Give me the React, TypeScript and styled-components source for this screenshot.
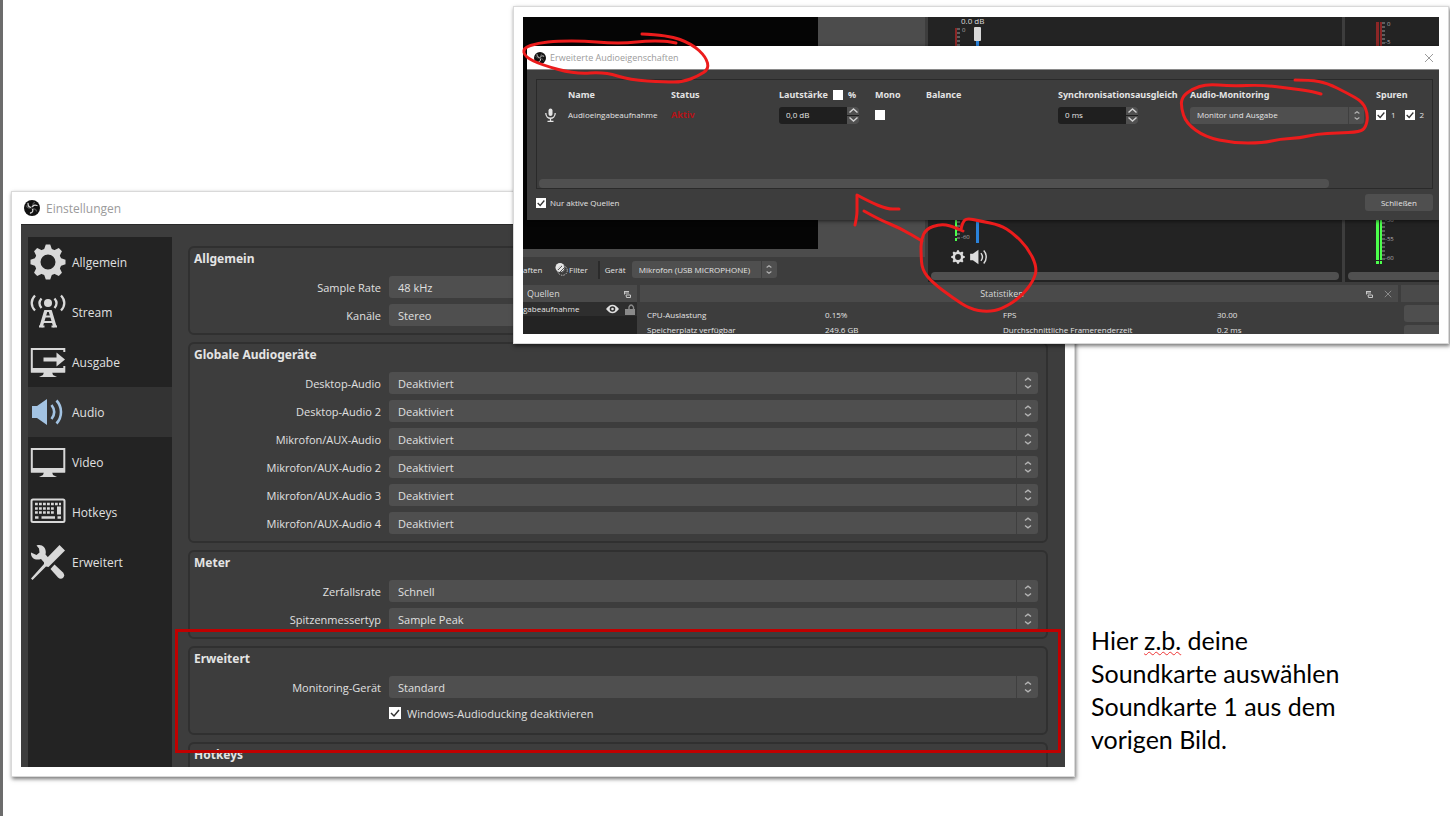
import React, { useId } from "react";
import styled, { createGlobalStyle, css } from "styled-components";

const GlobalStyle = createGlobalStyle`
  *, *::before, *::after { box-sizing: border-box; }
  body { margin: 0; background: #fff; }
  button, input, select { font: inherit; color: inherit; margin: 0; padding: 0; border: 0; background: none; border-radius: 0; }
`;

const uiFont = `"Open Sans", "Noto Sans", sans-serif`;
const boldFont = `"Noto Sans", "Open Sans", sans-serif`;

const Slide = styled.main`
  position: relative;
  display: flex;
  align-items: flex-start;
  min-height: 100vh;
  padding: 191px 0 38px 8px;
  border-left: 3px solid #6c6c6c;
  overflow: hidden;
  font-family: ${uiFont};
`;

const frame = css`
  border: 1px solid #d9d9d9;
  background: #fff;
  box-shadow: 1px 2px 4px rgba(0, 0, 0, 0.55);
`;

/* ---------- settings window ---------- */

const SettingsCard = styled.section`
  ${frame}
  position: relative;
  flex: 1;
  min-width: 0;
  padding: 0 9px 9px;
  font-size: 11px;
  color: #e0e0e0;
`;

const SettingsTitle = styled.header`
  display: flex;
  align-items: center;
  gap: 6px;
  height: 32px;
  padding-left: 3px;
  font-size: 12px;
  color: #9b9b9b;
`;

const SettingsBody = styled.div`
  display: flex;
  gap: 16px;
  padding: 12px 17px 0 7px;
  background: #3d3d3d;
  border-top: 1px solid #2a2a2a;
`;

const Sidebar = styled.nav`
  width: 144px;
  background: #232323;
`;

const SideItem = styled.button<{ $active?: boolean }>`
  display: flex;
  align-items: center;
  gap: 6px;
  width: 100%;
  height: 50px;
  padding: 0 2px;
  text-align: left;
  font-size: 12px;
  color: #e0e0e0;
  background: ${(p) => (p.$active ? "#333333" : "transparent")};
  svg { color: ${(p) => (p.$active ? "#a3c3e2" : "#d8d8d8")}; }
`;

const Groups = styled.div`
  flex: 1;
  min-width: 0;
  display: flex;
  flex-direction: column;
  gap: 7px;
  padding-top: 9px;
`;

const Group = styled.section<{ $cut?: boolean }>`
  border: 2px solid #303030;
  border-radius: ${(p) => (p.$cut ? "6px 6px 0 0" : "6px")};
  border-bottom-width: ${(p) => (p.$cut ? "0" : "2px")};
  height: ${(p) => (p.$cut ? "25px" : "auto")};
  padding: 0 8px 7px 4px;
`;

const GroupTitle = styled.h2`
  margin: 0;
  height: 28px;
  padding-top: 2px;
  font-family: ${boldFont};
  font-size: 12px;
  line-height: 18px;
  font-weight: 700;
  color: #e4e4e4;
`;

const Rows = styled.div`
  display: flex;
  flex-direction: column;
  gap: 6px;
`;

const FormRow = styled.div`
  display: grid;
  grid-template-columns: 187px 1fr;
  gap: 8px;
  align-items: center;
  > label { text-align: right; }
`;

const CheckRow = styled.label`
  display: flex;
  align-items: center;
  gap: 6px;
  height: 18px;
  margin: 0 0 4px 195px;
`;

const Highlight = styled.div`
  position: absolute;
  left: 163px;
  right: 13px;
  bottom: 23px;
  height: 124px;
  border: 3px solid #c00000;
`;

/* ---------- shared controls ---------- */

const SelectBox = styled.span<{ $small?: boolean }>`
  display: grid;
  grid-template-columns: 1fr ${(p) => (p.$small ? "16px" : "22px")};
  height: ${(p) => (p.$small ? "17px" : "22px")};
  border-radius: 3px;
  background: #4f4f4f;
  overflow: hidden;
  > select {
    grid-area: 1 / 1 / 2 / 3;
    width: 100%;
    appearance: none;
    padding-left: ${(p) => (p.$small ? "7px" : "9px")};
  }
  > span {
    grid-area: 1 / 2;
    display: flex;
    align-items: center;
    justify-content: center;
    border-left: 1px solid #3f3f3f;
    pointer-events: none;
    color: #b4b4b4;
  }
`;

const Tick = styled.span<{ $size: number }>`
  display: inline-grid;
  width: ${(p) => p.$size}px;
  height: ${(p) => p.$size}px;
  background: #fff;
  color: #333;
  > * { grid-area: 1 / 1; width: 100%; height: 100%; }
  > input { appearance: none; }
  > svg { pointer-events: none; }
`;

function CheckBox({ size, on, label }: { size: number; on?: boolean; label?: string }) {
  return (
    <Tick $size={size}>
      <input type="checkbox" defaultChecked={on} aria-label={label} />
      {on && (
        <svg viewBox="0 0 12 12" fill="none" stroke="currentColor" strokeWidth="1.5">
          <path d="M2 6l3 3 5-6" />
        </svg>
      )}
    </Tick>
  );
}

function Select({ id, value, small, label }: { id?: string; value: string; small?: boolean; label?: string }) {
  return (
    <SelectBox $small={small}>
      <select id={id} aria-label={label} defaultValue={value}>
        <option>{value}</option>
      </select>
      <span>
        <svg width={small ? 8 : 10} height={small ? 11 : 14} viewBox="0 0 10 14" fill="none" stroke="currentColor" strokeWidth="1.4">
          <path d="M2 4.5L5 2.200l3 2.300M2 9.500l3 2.300 3-2.300" />
        </svg>
      </span>
    </SelectBox>
  );
}

function Field({ label, value }: { label: string; value: string }) {
  const id = useId();
  return (
    <FormRow>
      <label htmlFor={id}>{label}</label>
      <Select id={id} value={value} />
    </FormRow>
  );
}

/* ---------- icons ---------- */

function ObsLogo({ size }: { size: number }) {
  return (
    <svg width={size} height={size} viewBox="0 0 32 32">
      <circle cx="16" cy="16" r="16" fill="#111" />
      <g fill="none" stroke="#d5d5d5" strokeWidth="2.6" strokeLinecap="round">
        <path d="M8 7c0 5 3 8 8 8" />
        <path d="M26 11c-5-2-9 0-10 5" />
        <path d="M13 26c5-1 6-6 3-10" />
        <path d="M5 12c2 4 6 5 9 3M21 5c-3 1-4 5-3 8M25 22c-1-3-4-5-7-4" opacity=".35" />
      </g>
      <circle cx="16" cy="16" r="2" fill="#111" />
    </svg>
  );
}

function Gear({ size }: { size: number }) {
  return (
    <svg width={size} height={size} viewBox="0 0 36 36" fill="currentColor">
      <circle cx="18" cy="18" r="10.500" fill="none" stroke="currentColor" strokeWidth="6" />
      {[0, 45, 90, 135, 180, 225, 270, 315].map((a) => (
        <path key={a} d="M13.500 7L15.800.500h4.400L22.500 7z" transform={`rotate(${a} 18 18)`} />
      ))}
    </svg>
  );
}

function Antenna() {
  return (
    <svg width="36" height="36" viewBox="0 0 36 36" fill="none" stroke="currentColor">
      <circle cx="18" cy="9" r="4" fill="currentColor" stroke="none" />
      <path d="M11.500 4.500c-2.600 3-2.600 6.500 0 9.500M24.500 4.500c2.600 3 2.600 6.500 0 9.500M5 1.500c-4.400 4.500-4.400 10.500 0 15M31 1.500c4.400 4.500 4.400 10.500 0 15" strokeWidth="2.300" />
      <path d="M15.900 16.500L11 33M20.100 16.500L25 33" strokeWidth="3.400" />
      <path d="M15 17h6M14 22.500h8M12.500 28h11M9 32.500h5.500M21.500 32.500H27" strokeWidth="2.200" />
    </svg>
  );
}

function Monitor({ arrow }: { arrow?: boolean }) {
  return (
    <svg width="36" height="36" viewBox="0 0 36 36" fill="currentColor">
      <path d={arrow ? "M34.300 8V5H1.800v22.500h32.500V22" : "M1.800 5h32.500v22.500H1.800z"} fill="none" stroke="currentColor" strokeWidth="2" />
      <path d="M1 24h34v4.500H1zM14 28h8l1 3 4 2H9l4-2z" />
      {arrow && <path d="M13.500 13.500h13V8.500l8.500 7-8.500 7v-5h-13z" />}
    </svg>
  );
}

function Speaker({ size }: { size: number }) {
  return (
    <svg width={size} height={size} viewBox="0 0 36 36" fill="currentColor">
      <path d="M2 12h5l10-7v26L7 24H2z" />
      <path d="M21.500 11c3.500 4.500 3.500 9.500 0 14M26.500 6.500c6 6.500 6 16.500 0 23" fill="none" stroke="currentColor" strokeWidth="2.600" />
    </svg>
  );
}

function Keyboard() {
  return (
    <svg width="36" height="36" viewBox="0 0 36 36" fill="none" stroke="currentColor">
      <rect x="1.500" y="5.500" width="33" height="22.500" rx="1.500" strokeWidth="2" />
      <path d="M5 10h26M5 14.500h20M5 18.500h20" strokeWidth="2.600" strokeDasharray="2.800 1.200" />
      <path d="M5 23.500h3.500M11.500 23.500H25M27.500 23.500H31" strokeWidth="2.600" />
      <path d="M29 12.500v8" strokeWidth="4" />
    </svg>
  );
}

function Tools() {
  return (
    <svg width="36" height="36" viewBox="0 0 36 36" fill="currentColor">
      <path d="M1 8.500l5.500 2.500 3-2.500-.5-4L6.500 1.500c6-2 10.500 2.500 9 9l4 4.500-4.500 4.500-4-4.500C5.500 17 .500 14 1 8.500z" />
      <path d="M20.500 25l4-4.500 8.500 8c3.500 4-1.500 8.500-5 5z" />
      <path d="M29.500 1l5.500 5.500L18.500 23l-2.500-.500L2.500 36 1 34.500 14 20v-3z" />
    </svg>
  );
}

function Microphone() {
  return (
    <svg width="13" height="14" viewBox="0 0 13 14" fill="none" stroke="currentColor" strokeWidth="1.300">
      <rect x="4.500" y="0.500" width="4" height="7.500" rx="2" fill="currentColor" stroke="none" />
      <path d="M1.800 5c0 7 9.400 7 9.400 0M6.500 10.500V13M3.500 13.300h6" />
    </svg>
  );
}

function Detach() {
  return (
    <svg width="8" height="8" viewBox="0 0 8 8" fill="none" stroke="#c8c8c8">
      <path d="M1 1.500h5M1 3h5M1.500 1v3.500M3 5h4.500v2.500h-4z" />
    </svg>
  );
}

function Cross({ size }: { size: number }) {
  return (
    <svg width={size} height={size} viewBox="0 0 10 10" fill="none" stroke="currentColor" strokeWidth="1">
      <path d="M1 1l8 8M9 1L1 9" />
    </svg>
  );
}

/* ---------- capture of the main window with the audio dialog ---------- */

const CaptureCard = styled.section`
  ${frame}
  position: absolute;
  top: 6px;
  left: 510px;
  right: 1px;
  padding: 10px 9px 9px;
  font-size: 8px;
  line-height: 12px;
  color: #e4e4e4;
`;

const Capture = styled.div`
  position: relative;
  height: 317px;
  display: flex;
  flex-direction: column;
  background: #3d3d3d;
  overflow: hidden;
`;

const TopArea = styled.div`
  display: flex;
  gap: 3px;
  height: 265px;
`;

const PreviewColumn = styled.div`
  width: 402px;
  display: flex;
  flex-direction: column;
`;

const Preview = styled.div`
  flex: 1;
  padding: 0 107px 8px 0;
  background: #4c4c4c;
  &::before { content: ""; display: block; height: 100%; background: #050505; }
`;

const Toolbar = styled.div`
  display: flex;
  align-items: center;
  height: 25px;
  > label { width: 32px; padding-left: 5px; }
  > span:first-child { width: 21px; }
`;

const FilterLabel = styled.button`
  display: flex;
  align-items: center;
  gap: 1px;
  margin: 0 10px 0 11px;
`;

const Divider = styled.span`
  width: 2px;
  height: 18px;
  background: #2b2b2b;
`;

const DeviceSelect = styled.div`
  width: 145px;
`;

const Mixer = styled.div<{ $width?: number }>`
  ${(p) => (p.$width ? `width: ${p.$width}px;` : "flex: 1;")}
  display: flex;
  flex-direction: column;
  background: #232323;
  overflow: hidden;
`;

const MeterArea = styled.div`
  flex: 1;
  position: relative;
  > svg { display: block; }
`;

const MixerButtons = styled.div`
  display: flex;
  align-items: center;
  gap: 4px;
  height: 24px;
  padding: 0 0 6px 23px;
  button { display: flex; color: #dcdcdc; }
`;

const ScrollThumb = styled.div<{ $cut?: boolean }>`
  height: 8px;
  margin: ${(p) => (p.$cut ? "0 0 2px 3px" : "0 3px 2px")};
  border-radius: ${(p) => (p.$cut ? "4px 0 0 4px" : "4px")};
  background: #505050;
`;

const Docks = styled.div`
  flex: 1;
  display: flex;
  gap: 3px;
  padding-top: 3px;
  min-height: 0;
`;

const Dock = styled.div<{ $width?: number }>`
  ${(p) => (p.$width ? `width: ${p.$width}px;` : "flex: 1;")}
  overflow: hidden;
`;

const DockHead = styled.div<{ $center?: boolean }>`
  display: flex;
  align-items: center;
  gap: 11px;
  height: 17px;
  padding: 0 6px 0 ${(p) => (p.$center ? "10px" : "4px")};
  background: #4a4a4a;
  font-size: 9px;
  color: #d8d8d8;
  > span { flex: 1; text-align: ${(p) => (p.$center ? "center" : "left")}; }
  button { display: flex; color: #9a9a9a; }
`;

const SourceList = styled.div`
  height: 40px;
  background: #232323;
`;

const Source = styled.div`
  display: flex;
  align-items: center;
  gap: 6px;
  height: 14px;
  padding-right: 2px;
  background: #2e2e2e;
  > span { flex: 1; }
`;

const StatsTable = styled.table`
  width: 100%;
  border-collapse: collapse;
  table-layout: fixed;
  margin-top: 5px;
  td { padding: 0 0 0 7px; height: 15px; font-weight: 400; white-space: nowrap; }
`;

const SideButton = styled.button`
  display: block;
  width: 100%;
  height: 17px;
  margin: 3px 0 0 3px;
  border-radius: 3px 0 0 3px;
  background: #4e4e4e;
`;

const Dialog = styled.div`
  position: absolute;
  top: 29px;
  left: 4px;
  right: 0;
  background: #3d3d3d;
  box-shadow: 0 1px 4px rgba(0, 0, 0, 0.6);
`;

const DialogTitle = styled.header`
  display: flex;
  align-items: center;
  gap: 4px;
  height: 24px;
  padding: 0 5px 0 7px;
  background: #fff;
  font-size: 9px;
  color: #9b9b9b;
  border-bottom: 1px solid #8a8a8a;
  > span { flex: 1; }
  button { display: flex; }
`;

const DialogBody = styled.div`
  padding: 9px 6px 9px 9px;
`;

const TableFrame = styled.div`
  height: 110px;
  display: flex;
  flex-direction: column;
  justify-content: space-between;
  border: 1px solid #2a2a2a;
  padding: 5px 0 0;
`;

const AudioTable = styled.table`
  width: 100%;
  border-collapse: collapse;
  table-layout: fixed;
  th, td { height: 20px; padding: 0; text-align: left; white-space: nowrap; }
  th { font-family: ${boldFont}; font-size: 9px; font-weight: 700; color: #e4e4e4; }
`;

const TableScroll = styled.div`
  height: 9px;
  margin: 0 103px 0 2px;
  border-radius: 4px;
  background: #505050;
`;

const Inline = styled.span<{ $gap: number }>`
  display: flex;
  align-items: center;
  gap: ${(p) => p.$gap}px;
`;

const MicCell = styled.span`
  display: flex;
  padding-left: 7px;
`;

const TrackLabel = styled.label`
  display: flex;
  align-items: center;
  gap: 5px;
`;

const Active = styled.span`
  font-family: ${boldFont};
  font-size: 9px;
  font-weight: 700;
  color: #b51217;
`;

const MonitorSelect = styled.div`
  width: 174px;
`;

const SpinBox = styled.span`
  display: grid;
  grid-template-columns: 1fr 12px;
  grid-template-rows: 1fr 1fr;
  width: 80px;
  height: 17px;
  row-gap: 1px;
  border-radius: 3px;
  background: #1f1f1f;
  overflow: hidden;
  input { grid-row: 1 / 3; min-width: 0; padding-left: 7px; }
  button { display: flex; align-items: center; justify-content: center; background: #505050; color: #d0d0d0; }
`;

function Spin({ value, label }: { value: string; label: string }) {
  return (
    <SpinBox>
      <input type="text" defaultValue={value} aria-label={label} />
      <button aria-label={`${label} erhöhen`}>
        <svg width="9" height="5" viewBox="0 0 9 5" fill="none" stroke="currentColor" strokeWidth="1.400"><path d="M.500 4.500l4-3.500 4 3.500" /></svg>
      </button>
      <button aria-label={`${label} verringern`}>
        <svg width="9" height="5" viewBox="0 0 9 5" fill="none" stroke="currentColor" strokeWidth="1.400"><path d="M.500.500l4 3.500 4-3.500" /></svg>
      </button>
    </SpinBox>
  );
}

const DialogFooter = styled.footer`
  display: flex;
  align-items: center;
  justify-content: space-between;
  padding-top: 5px;
  label { display: flex; align-items: center; gap: 4px; }
  button { width: 68px; height: 17px; border-radius: 3px; background: #4f4f4f; }
`;

const Ink = styled.svg`
  position: absolute;
  top: -1px;
  left: -1px;
  pointer-events: none;
`;

const Note = styled.p`
  flex: none;
  width: 375px;
  margin: 433px 0 0;
  padding: 0 80px 0 16px;
  font-family: Lato, "Liberation Sans", sans-serif;
  font-size: 25px;
  line-height: 33px;
  color: #000;
`;

const Misspelled = styled.span`
  text-decoration: underline wavy #e33 1px;
  text-underline-offset: 1px;
  text-decoration-skip-ink: none;
`;

/* Freehand strokes: sampled pen points joined through their midpoints. */
type Pt = [number, number];
function penPath(p: Pt[]) {
  let d = `M${p[0][0]} ${p[0][1]}`;
  for (let i = 1; i < p.length - 1; i++) {
    d += `Q${p[i][0]} ${p[i][1]} ${(p[i][0] + p[i + 1][0]) / 2} ${(p[i][1] + p[i + 1][1]) / 2}`;
  }
  const last = p[p.length - 1];
  return `${d}L${last[0]} ${last[1]}`;
}

const strokes: Pt[][] = [
  [[642, 34], [668, 35], [692, 44], [706, 57], [709, 69], [698, 76], [683, 82], [665, 82], [630, 80], [605, 72], [575, 74], [542, 65], [525, 57], [523, 48], [538, 43], [558, 41], [585, 41], [608, 43], [628, 43], [645, 41], [665, 41], [676, 43]],
  [[1295, 80], [1310, 80], [1327, 83], [1347, 93], [1363, 102], [1368, 115], [1366, 127], [1360, 132], [1337, 133], [1317, 134], [1300, 138], [1280, 139], [1263, 143], [1233, 143], [1205, 137], [1186, 123], [1181, 107], [1182, 97], [1192, 89], [1207, 84], [1230, 86], [1263, 85], [1287, 88], [1310, 91], [1321, 94]],
  [[855, 225], [857, 216], [857, 206], [857, 196]],
  [[857, 195], [870, 202], [887, 209], [899, 209]],
  [[864, 211], [880, 220], [900, 228], [922, 241]],
  [[963, 231], [952, 226], [940, 224], [926, 229], [921, 240], [921, 253], [922, 270], [933, 283], [953, 298], [970, 309], [987, 312], [1002, 309], [1021, 297], [1034, 280], [1037, 267], [1028, 248], [1013, 233], [1000, 225], [980, 221], [966, 218], [962, 224], [961, 230]],
];

const deviceRows = ["Desktop-Audio", "Desktop-Audio 2", "Mikrofon/AUX-Audio", "Mikrofon/AUX-Audio 2", "Mikrofon/AUX-Audio 3", "Mikrofon/AUX-Audio 4"];

const sections = [
  { name: "Allgemein", icon: <Gear size={36} /> },
  { name: "Stream", icon: <Antenna /> },
  { name: "Ausgabe", icon: <Monitor arrow /> },
  { name: "Audio", icon: <Speaker size={36} />, active: true },
  { name: "Video", icon: <Monitor /> },
  { name: "Hotkeys", icon: <Keyboard /> },
  { name: "Erweitert", icon: <Tools /> },
];

function SettingsWindow() {
  return (
    <SettingsCard>
      <SettingsTitle>
        <ObsLogo size={16} />
        Einstellungen
      </SettingsTitle>
      <SettingsBody>
        <Sidebar>
          {sections.map((s) => (
            <SideItem key={s.name} $active={s.active}>
              {s.icon}
              {s.name}
            </SideItem>
          ))}
        </Sidebar>
        <Groups>
          <Group>
            <GroupTitle>Allgemein</GroupTitle>
            <Rows>
              <Field label="Sample Rate" value="48 kHz" />
              <Field label="Kanäle" value="Stereo" />
            </Rows>
          </Group>
          <Group>
            <GroupTitle>Globale Audiogeräte</GroupTitle>
            <Rows>
              {deviceRows.map((d) => (
                <Field key={d} label={d} value="Deaktiviert" />
              ))}
            </Rows>
          </Group>
          <Group>
            <GroupTitle>Meter</GroupTitle>
            <Rows>
              <Field label="Zerfallsrate" value="Schnell" />
              <Field label="Spitzenmessertyp" value="Sample Peak" />
            </Rows>
          </Group>
          <Group>
            <GroupTitle>Erweitert</GroupTitle>
            <Rows>
              <Field label="Monitoring-Gerät" value="Standard" />
              <CheckRow>
                <CheckBox size={12} on />
                Windows-Audioducking deaktivieren
              </CheckRow>
            </Rows>
          </Group>
          <Group $cut>
            <GroupTitle>Hotkeys</GroupTitle>
          </Group>
        </Groups>
      </SettingsBody>
      <Highlight />
    </SettingsCard>
  );
}

function ticks(x: number, from: number, to: number) {
  let d = "";
  for (let y = from; y <= to; y += 4) d += `M${x} ${y}h3`;
  return d;
}

function MicMeter() {
  return (
    <svg width="80" height="226" fontSize="6" fill="#b0b0b0">
      <text x="33" y="7" fontSize="8" fill="#dcdcdc">0.0 dB</text>
      <path d="M27 11h2v18h-2z" fill="#8c2626" />
      <path d="M27 200h2v19h-2zM27 221h2v3h-2z" fill="#4cff4c" />
      <path d={ticks(29, 12, 30) + ticks(29, 201, 221)} stroke="#9a9a9a" />
      <text x="34" y="15">0</text>
      <text x="33" y="222">-60</text>
      <rect x="48" y="24" width="3" height="204" fill="#2a82da" />
      <rect x="46" y="10" width="7" height="14" rx="1" fill="#d8d8d8" />
    </svg>
  );
}

function DesktopMeter() {
  return (
    <svg width="94" height="252" fontSize="6" fill="#b0b0b0">
      <path d="M31 5h3v26h-3zM35 5h2v26h-2z" fill="#8c2626" />
      <path d="M31 200h3v43h-3zM35 200h2v43h-2zM31 244h3v3h-3zM35 244h2v3h-2z" fill="#4cff4c" />
      <path d={ticks(37, 6, 30) + ticks(37, 202, 242)} stroke="#9a9a9a" />
      <text x="42" y="9">0</text>
      <text x="40" y="27">-5</text>
      <text x="40" y="205">-50</text>
      <text x="40" y="224">-55</text>
      <text x="40" y="243">-60</text>
    </svg>
  );
}

function AudioDialog() {
  return (
    <Dialog role="dialog" aria-label="Erweiterte Audioeigenschaften">
      <DialogTitle>
        <ObsLogo size={12} />
        <span>Erweiterte Audioeigenschaften</span>
        <button aria-label="Fenster schließen"><Cross size={10} /></button>
      </DialogTitle>
      <DialogBody>
        <TableFrame>
          <AudioTable>
            <colgroup>
              <col width="31" /><col width="103" /><col width="108" /><col width="96" /><col width="51" /><col /><col width="132" /><col width="186" /><col width="56" />
            </colgroup>
            <thead>
              <tr>
                <th />
                <th>Name</th>
                <th>Status</th>
                <th><Inline $gap={5}>Lautstärke <CheckBox size={10} label="Prozent" /> %</Inline></th>
                <th>Mono</th>
                <th>Balance</th>
                <th>Synchronisationsausgleich</th>
                <th>Audio-Monitoring</th>
                <th>Spuren</th>
              </tr>
            </thead>
            <tbody>
              <tr>
                <td><MicCell><Microphone /></MicCell></td>
                <td>Audioeingabeaufnahme</td>
                <td><Active>Aktiv</Active></td>
                <td><Spin value="0,0 dB" label="Lautstärke" /></td>
                <td><Inline $gap={0}><CheckBox size={10} label="Mono" /></Inline></td>
                <td />
                <td><Spin value="0 ms" label="Synchronisationsausgleich" /></td>
                <td><MonitorSelect><Select small value="Monitor und Ausgabe" label="Audio-Monitoring" /></MonitorSelect></td>
                <td>
                  <Inline $gap={9}>
                    <TrackLabel><CheckBox size={10} on />1</TrackLabel>
                    <TrackLabel><CheckBox size={10} on />2</TrackLabel>
                  </Inline>
                </td>
              </tr>
            </tbody>
          </AudioTable>
          <TableScroll />
        </TableFrame>
        <DialogFooter>
          <label><CheckBox size={10} on />Nur aktive Quellen</label>
          <button>Schließen</button>
        </DialogFooter>
      </DialogBody>
    </Dialog>
  );
}

function CaptureWindow() {
  const deviceId = useId();
  return (
    <CaptureCard>
      <Capture>
        <TopArea>
          <PreviewColumn>
            <Preview />
            <Toolbar>
              <span>aften</span>
              <FilterLabel>
                <svg width="13" height="13" viewBox="0 0 13 13">
                  <circle cx="5" cy="4.500" r="4.500" fill="#e6e6e6" />
                  <circle cx="7.500" cy="7.500" r="4.800" fill="none" stroke="#bbb" strokeDasharray="1.500 1" />
                  <path d="M3 7l4-4M5 9l5-5M7 10l3.500-3.500" stroke="#555" />
                </svg>
                Filter
              </FilterLabel>
              <Divider />
              <label htmlFor={deviceId}>Gerät</label>
              <DeviceSelect><Select id={deviceId} small value="Mikrofon (USB MICROPHONE)" /></DeviceSelect>
            </Toolbar>
          </PreviewColumn>
          <Mixer>
            <MeterArea><MicMeter /></MeterArea>
            <MixerButtons>
              <button aria-label="Mixer-Einstellungen"><Gear size={14} /></button>
              <button aria-label="Stummschalten"><Speaker size={20} /></button>
            </MixerButtons>
            <ScrollThumb />
          </Mixer>
          <Mixer $width={94}>
            <MeterArea><DesktopMeter /></MeterArea>
            <ScrollThumb $cut />
          </Mixer>
        </TopArea>
        <Docks>
          <Dock $width={114}>
            <DockHead><span>Quellen</span><Detach /></DockHead>
            <SourceList>
              <Source>
                <span>gabeaufnahme</span>
                <svg width="13" height="10" viewBox="0 0 13 10"><path d="M0 5q6.500-8.500 13 0-6.500 8.500-13 0z" fill="#e0e0e0" /><circle cx="6.500" cy="5" r="2.800" fill="#2e2e2e" /><circle cx="6.500" cy="5" r="1.300" fill="#e0e0e0" /></svg>
                <svg width="10" height="11" viewBox="0 0 10 11"><path d="M0 5h10v6H0z" fill="#8a8a8a" /><path d="M4 5V3q2-4 4.500 0v2" fill="none" stroke="#8a8a8a" strokeWidth="1.400" /></svg>
              </Source>
            </SourceList>
          </Dock>
          <Dock>
            <DockHead $center>
              <span>Statistiken</span>
              <Detach />
              <button aria-label="Statistiken schließen"><Cross size={8} /></button>
            </DockHead>
            <StatsTable>
              <colgroup><col width="178" /><col width="178" /><col width="214" /><col /></colgroup>
              <tbody>
                <tr><td>CPU-Auslastung</td><td>0.15%</td><td>FPS</td><td>30.00</td></tr>
                <tr><td>Speicherplatz verfügbar</td><td>249.6 GB</td><td>Durchschnittliche Framerenderzeit</td><td>0.2 ms</td></tr>
              </tbody>
            </StatsTable>
          </Dock>
          <Dock $width={38}>
            <DockHead />
            <SideButton aria-label="Streaming" />
            <SideButton aria-label="Aufnahme" />
          </Dock>
        </Docks>
        <AudioDialog />
      </Capture>
      <Ink width="936" height="338" viewBox="513 6 936 338" fill="none" stroke="#ec1c1c" strokeWidth="3" strokeLinecap="round" strokeLinejoin="round">
        {strokes.map((s, i) => (
          <path key={i} d={penPath(s)} />
        ))}
      </Ink>
    </CaptureCard>
  );
}

export default function App() {
  return (
    <>
      <GlobalStyle />
      <Slide>
        <SettingsWindow />
        <Note>
          Hier <Misspelled>z.b.</Misspelled> deine Soundkarte auswählen Soundkarte 1 aus dem vorigen Bild.
        </Note>
        <CaptureWindow />
      </Slide>
    </>
  );
}
